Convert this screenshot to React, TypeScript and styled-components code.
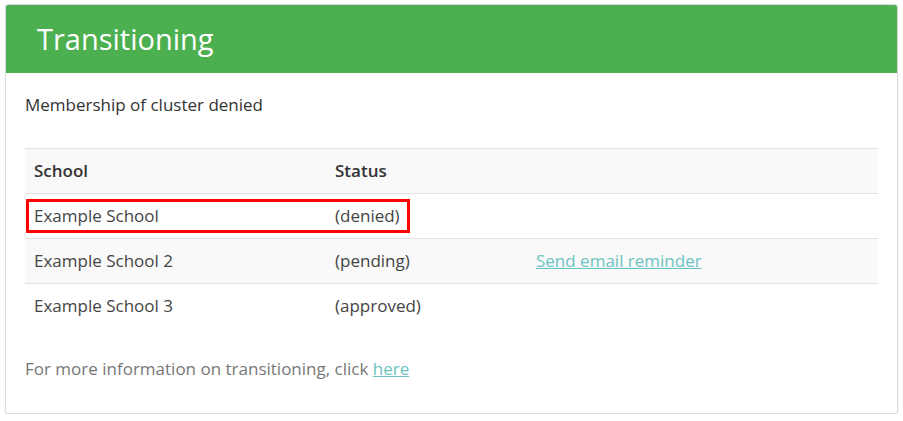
import styled, { createGlobalStyle } from 'styled-components';

const GlobalStyle = createGlobalStyle`
  html, body {
    margin: 0;
    background: #fff;
  }
  body {
    font-family: 'Open Sans', 'Noto Sans', sans-serif;
    color: #333;
  }
`;

const schools = [
  { name: 'Example School', status: '(denied)', highlight: true },
  { name: 'Example School 2', status: '(pending)', action: 'Send email reminder' },
  { name: 'Example School 3', status: '(approved)' },
];

function App() {
  return (
    <>
      <GlobalStyle />
      <Page>
        <Panel>
          <PanelHeading>Transitioning</PanelHeading>
          <PanelBody>
            <Lead>Membership of cluster denied</Lead>
            <Table>
              <HeadRow>
                <HeadCell>School</HeadCell>
                <HeadCell>Status</HeadCell>
                <HeadCell />
              </HeadRow>
              {schools.map(({ name, status, action, highlight }, i) => (
                <Row key={name} $striped={i % 2 === 1}>
                  <Cell>
                    {name}
                    {highlight && <Highlight />}
                  </Cell>
                  <Cell>{status}</Cell>
                  <Cell>{action && <TextLink href="#">{action}</TextLink>}</Cell>
                </Row>
              ))}
            </Table>
            <Note>
              For more information on transitioning, click <TextLink href="#">here</TextLink>
            </Note>
          </PanelBody>
        </Panel>
      </Page>
    </>
  );
}

export default App;

const Page = styled.div`
  padding: 4px 5px 0 5px;
`;

const Panel = styled.section`
  border: 1px solid #dcdcdc;
  border-radius: 3px;
  box-shadow: 0 1px 2px rgba(0, 0, 0, 0.08);
  overflow: hidden;
  background: #fff;
`;

const PanelHeading = styled.h2`
  margin: 0;
  height: 68px;
  display: flex;
  align-items: center;
  padding: 0 31px;
  background: #4caf50;
  color: #fff;
  font-size: 29px;
  font-weight: 400;
  padding-bottom: 1px;
  box-sizing: border-box;
`;

const PanelBody = styled.div`
  padding: 21px 19px 33px 19px;
`;

const Lead = styled.p`
  margin: 0 0 32px;
  font-size: 17px;
  line-height: 22px;
`;

const Table = styled.div`
  display: grid;
  grid-template-columns: 301px 201px 1fr;
  font-size: 17px;
  line-height: 22px;
`;

const HeadRow = styled.div`
  display: contents;

  > div {
    background: #f9f9f9;
    border-top: 1px solid #e2e2e2;
  }
`;

const Row = styled.div<{ $striped: boolean }>`
  display: contents;

  > div {
    background: ${({ $striped }) => ($striped ? '#f9f9f9' : '#fff')};
    border-top: 1px solid #e2e2e2;
  }
`;

const HeadCell = styled.div`
  padding: 11px 9px;
  font-weight: 600;
  color: #333;
`;

const Cell = styled.div`
  position: relative;
  padding: 11px 9px;
  color: #444;
`;

const Highlight = styled.span`
  position: absolute;
  z-index: 1;
  left: 1px;
  top: 5px;
  width: 384px;
  height: 34px;
  box-sizing: border-box;
  border: 3px solid #ff0000;
  pointer-events: none;
`;

const TextLink = styled.a`
  color: #6cc4c1;
  text-decoration: underline;
`;

const Note = styled.p`
  margin: 30px 0 0;
  font-size: 17px;
  line-height: 22px;
  color: #777;
`;
